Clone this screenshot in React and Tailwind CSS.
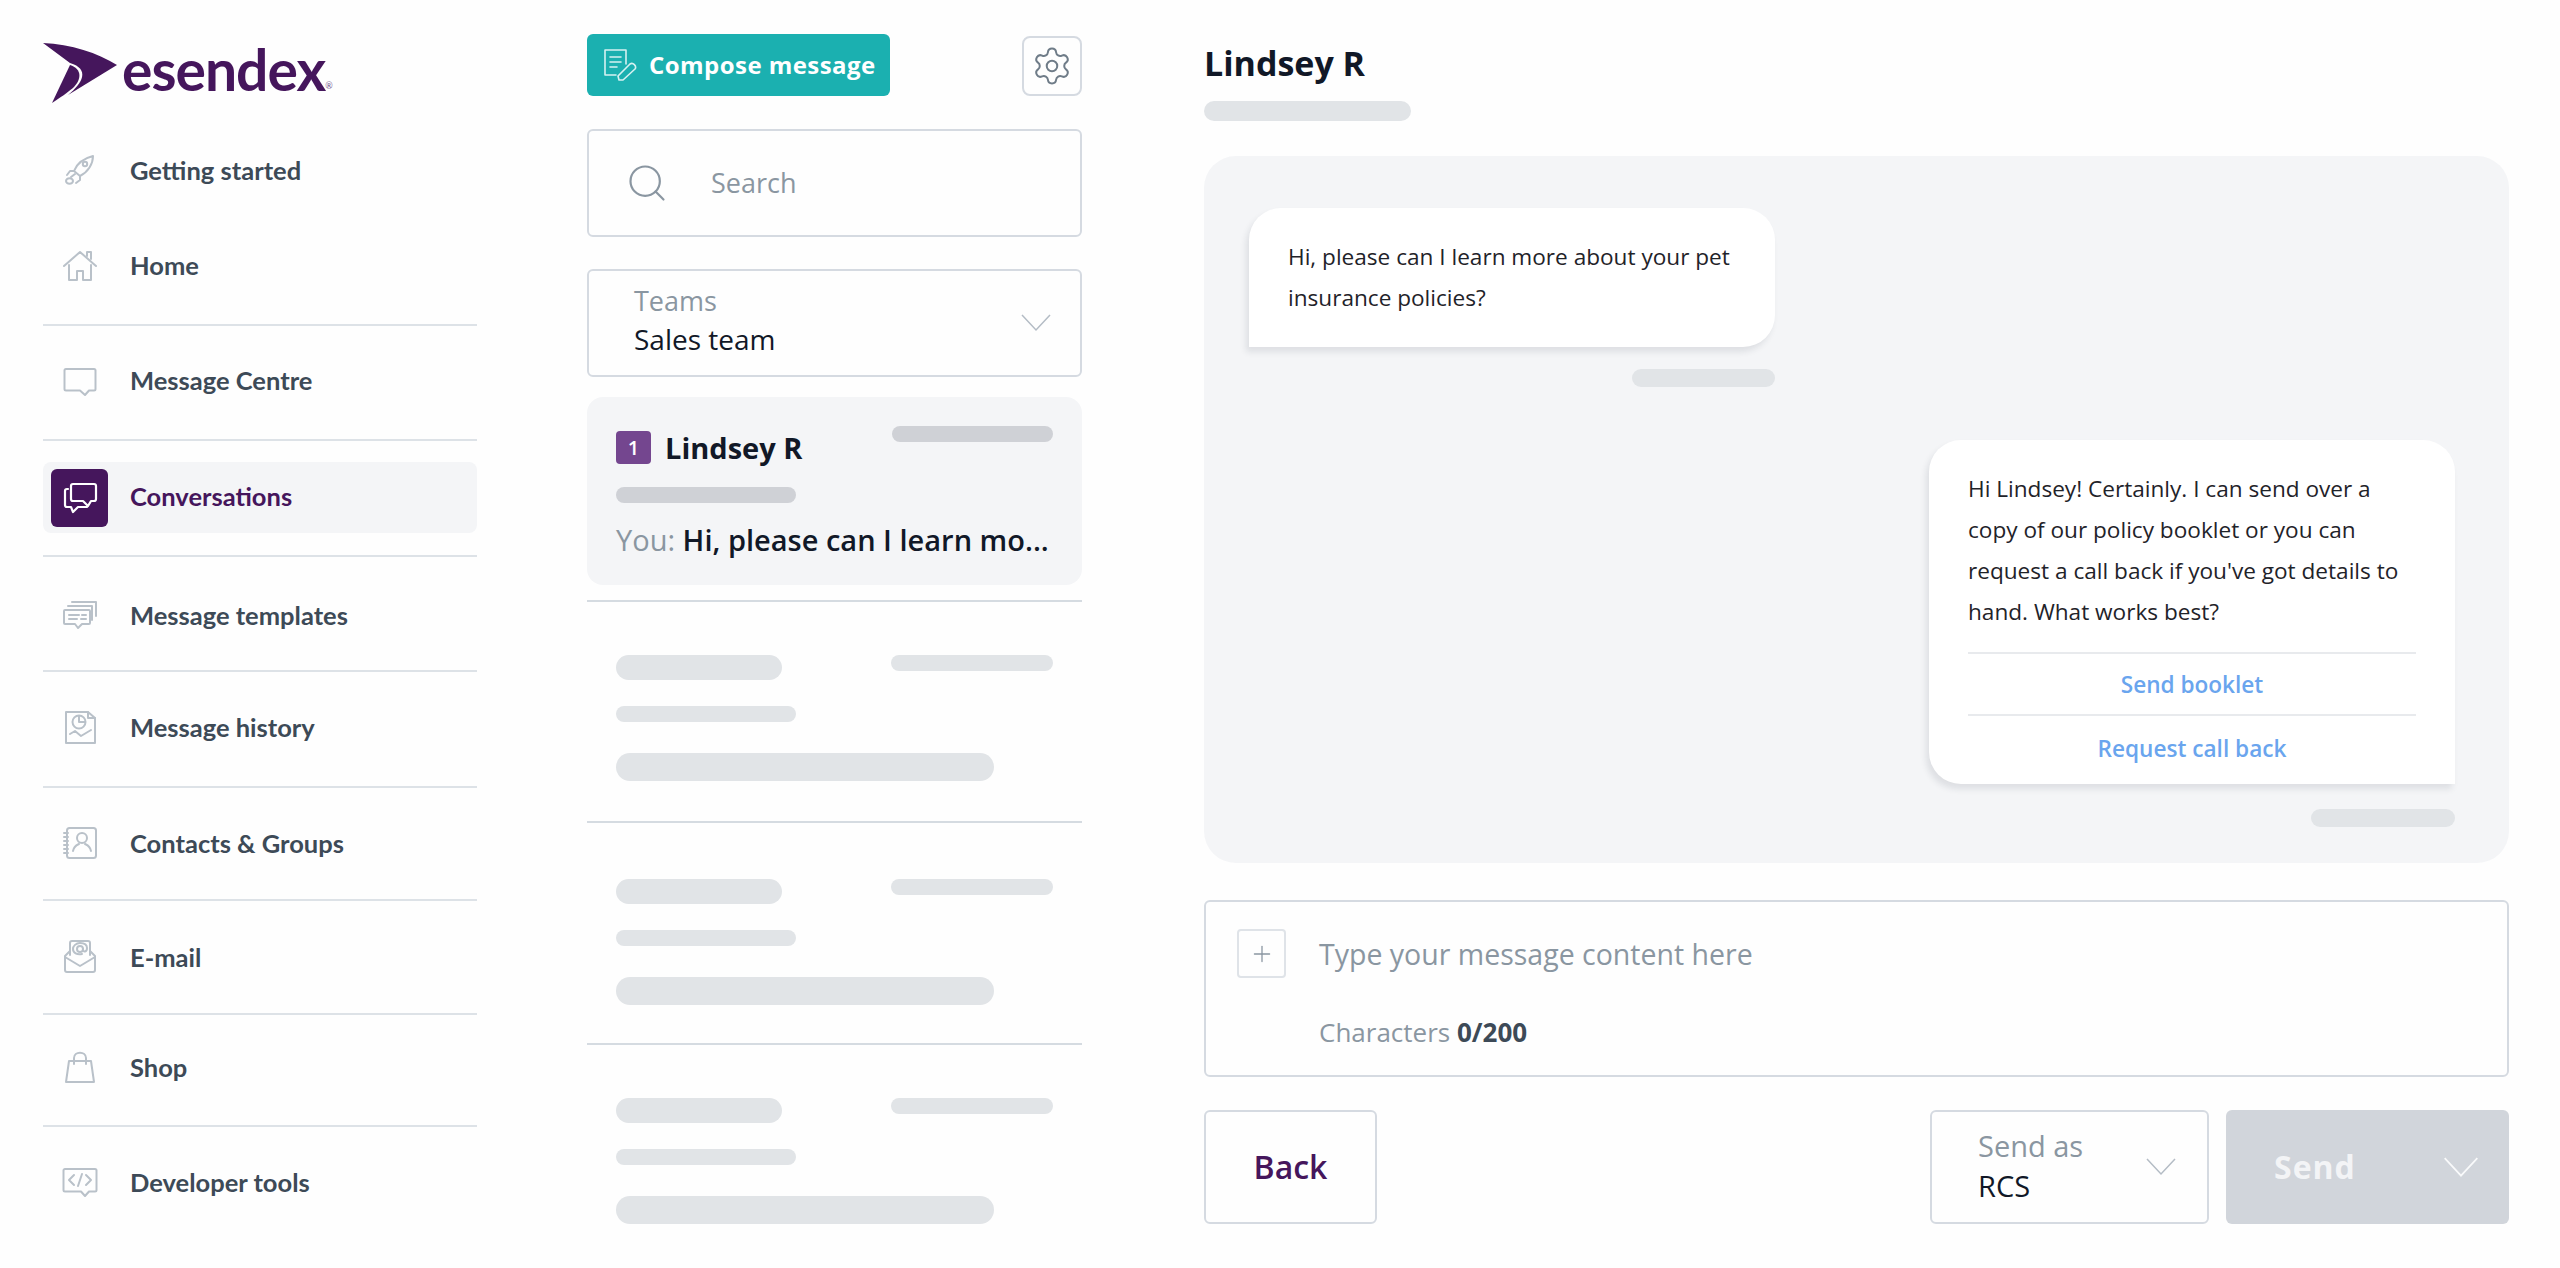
import React from "react";
import { Settings, Search, Plus } from "lucide-react";

const lato = { fontFamily: "Lato, sans-serif" };

const Icon = ({ children }) => (
  <svg width="36" height="36" viewBox="0 0 36 36" fill="none" stroke="#b9c1c9" strokeWidth="2" strokeLinejoin="round" strokeLinecap="round">
    {children}
  </svg>
);

const RocketIcon = () => (
  <Icon>
    <path d="M12 19 C15 11 23 6 31 4 C31 12 26 20 18 24 Z" />
    <circle cx="23" cy="12" r="2.2" />
    <path d="M12 19 L8 19 L5 23 M18 24 L18 28 L14 31" />
    <ellipse cx="7.5" cy="29" rx="3.5" ry="2.8" />
    <path d="M9 25 L13 22" />
  </Icon>
);

const HomeIcon = () => (
  <Icon>
    <path d="M2 19 L18 5 L34 19" />
    <path d="M25 9 L25 5 L29 5 L29 12" />
    <path d="M7 18 L7 33 L15 33 L15 24 L21 24 L21 33 L29 33 L29 18" />
  </Icon>
);

const ChatIcon = () => (
  <Icon>
    <path d="M4 6 H32 a1.5 1.5 0 0 1 1.5 1.5 V26 a1.5 1.5 0 0 1 -1.5 1.5 H27 L23 32 L18 27.5 H4 a1.5 1.5 0 0 1 -1.5 -1.5 V7.5 A1.5 1.5 0 0 1 4 6 Z" />
  </Icon>
);

const ConversationsIcon = () => (
  <svg width="36" height="36" viewBox="0 0 36 36" fill="none" stroke="#ffffff" strokeWidth="2.2" strokeLinejoin="round" strokeLinecap="round">
    <path d="M11 4 H32 a2 2 0 0 1 2 2 V19 a2 2 0 0 1 -2 2 H29 L26 26 L21 21 H11 a2 2 0 0 1 -2 -2 V6 a2 2 0 0 1 2 -2 Z" />
    <path d="M6 9 H5 a2 2 0 0 0 -2 2 V25 a2 2 0 0 0 2 2 H9 L11 32 L16 27 H25" />
  </svg>
);

const TemplatesIcon = () => (
  <Icon>
    <path d="M10 5 H34 V19 M6 9 H30 V23" />
    <path d="M3 13 H27 a1 1 0 0 1 1 1 V26 a1 1 0 0 1 -1 1 H20 L16 31 L13 27 H3 a1 1 0 0 1 -1 -1 V14 a1 1 0 0 1 1 -1 Z" />
    <path d="M7 18 H17 M7 22 H15 M20 18 H24 M19 22 H24" />
  </Icon>
);

const HistoryIcon = () => (
  <Icon>
    <path d="M4 3 H26 L33 9 V34 H4 Z" />
    <path d="M26 3 V9 H33" />
    <circle cx="17" cy="13" r="6.5" />
    <path d="M17 7 V13 H23" />
    <path d="M8 25 L13 22 L19 27 L29 21" />
  </Icon>
);

const ContactsIcon = () => (
  <Icon>
    <rect x="5" y="3" width="29" height="30" rx="2.5" />
    <path d="M2 8 H6 M2 12 H6 M2 16 H6 M2 20 H6 M2 24 H6 M2 28 H6" />
    <circle cx="20" cy="13" r="5" />
    <path d="M11 26 C12 21 15 20 17 19 M29 26 C28 21 25 20 23 19" />
  </Icon>
);

const EmailIcon = () => (
  <Icon>
    <path d="M8 16 V4 a2 2 0 0 1 2 -2 H26 a2 2 0 0 1 2 2 V16" />
    <circle cx="18" cy="10" r="3" />
    <path d="M21 10 C21 14 25 13 25 9 C25 5 21 4 18 4 C14 4 11 7 11 10 C11 14 15 16 20 15" />
    <path d="M8 12 L3 17 V31 a2 2 0 0 0 2 2 H31 a2 2 0 0 0 2 -2 V17 L28 12" />
    <path d="M3 18 L18 27 L33 18" />
  </Icon>
);

const ShopIcon = () => (
  <Icon>
    <path d="M7 12 H29 L32 33 H4 Z" />
    <path d="M12 15 V9 C12 2 24 2 24 9 V15" />
  </Icon>
);

const DevIcon = () => (
  <Icon>
    <path d="M3 5 H33 a1.5 1.5 0 0 1 1.5 1.5 V26 a1.5 1.5 0 0 1 -1.5 1.5 H27 L23 32 L19 27.5 H3 a1.5 1.5 0 0 1 -1.5 -1.5 V6.5 A1.5 1.5 0 0 1 3 5 Z" />
    <path d="M12 11 L7 16 L12 21 M24 11 L29 16 L24 21 M20 10 L16 22" />
  </Icon>
);

const navItems = [
  { label: "Getting started", icon: <RocketIcon />, row: "h-[96px] pb-[2px]" },
  { label: "Home", icon: <HomeIcon />, row: "h-[107px] pb-[13px] border-b-2 border-[#dde2e7]" },
  { label: "Message Centre", icon: <ChatIcon />, row: "h-[115px] pb-[4px] border-b-2 border-[#dde2e7]" },
  { label: "Conversations", icon: <ConversationsIcon />, row: "h-[116px] pb-[1px] border-b-2 border-[#dde2e7]", active: true },
  { label: "Message templates", icon: <TemplatesIcon />, row: "h-[115px] pt-[3px] border-b-2 border-[#dde2e7]" },
  { label: "Message history", icon: <HistoryIcon />, row: "h-[116px] pb-[4px] border-b-2 border-[#dde2e7]" },
  { label: "Contacts & Groups", icon: <ContactsIcon />, row: "h-[113px] pb-[1px] border-b-2 border-[#dde2e7]" },
  { label: "E-mail", icon: <EmailIcon />, row: "h-[114px] border-b-2 border-[#dde2e7]" },
  { label: "Shop", icon: <ShopIcon />, row: "h-[112px] pb-[6px] border-b-2 border-[#dde2e7]" },
  { label: "Developer tools", icon: <DevIcon />, row: "h-[110px]" },
];

const Chevron = ({ color = "#b4bcc5", size = "w-[30px] h-[18px]" }) => (
  <svg className={size} viewBox="0 0 30 18" fill="none" stroke={color} strokeWidth="1.5">
    <path d="M1 1 L15 16 L29 1" />
  </svg>
);

const Sidebar = () => (
  <aside className="w-[434px] ml-[43px] shrink-0" style={lato}>
    <div className="h-[123px] pt-[43px] flex items-start">
      <svg width="75" height="60" viewBox="0 0 75 60" fill="#45165c">
        <path d="M0 0 C28 1 55 10 74 22 L25 52 C40 40 47 26 27 20 Z" />
        <path d="M27 22 C39 26 39 36 30 45 C25 49 17 55 9 60 Z" />
      </svg>
      <span className="text-[57px] leading-[48px] font-bold text-[#45165c] tracking-[-1px] ml-[4px] mt-[2px]">esendex</span>
      <span className="text-[9px] leading-none text-[#7a5a90] mt-[38px]">®</span>
    </div>
    {navItems.map((item) => (
      <div key={item.label} className={`flex items-center ${item.row}`}>
        <div className={`flex items-center w-full ${item.active ? "h-[71px] bg-[#f4f5f7] rounded-lg pl-2" : "pl-2"}`}>
          <div className={`w-[57px] flex items-center justify-center ${item.active ? "h-[58px] bg-[#45165c] rounded-md" : ""}`}>
            {item.icon}
          </div>
          <span className={`ml-[22px] text-[25.5px] font-bold ${item.active ? "text-[#45165c] -mt-[2px]" : "text-[#3d4a57]"}`}>{item.label}</span>
        </div>
      </div>
    ))}
  </aside>
);

const Skeleton = ({ className }) => (
  <div className={className}>
    <div className="flex justify-between pl-[29px] pr-[29px]">
      <div className="w-[166px] h-[25px] rounded-full bg-[#e1e4e7]" />
      <div className="w-[162px] h-[16px] rounded-full bg-[#e1e4e7]" />
    </div>
    <div className="ml-[29px] mt-[26px] w-[180px] h-[16px] rounded-full bg-[#e1e4e7]" />
    <div className="ml-[29px] mt-[31px] w-[378px] h-[28px] rounded-full bg-[#e1e4e7]" />
  </div>
);

const ConversationList = () => (
  <section className="w-[495px] ml-[110px] shrink-0 pt-[34px]">
    <div className="flex justify-between items-center h-[62px]">
      <button className="w-[303px] h-[62px] rounded-md bg-[#1bb0b0] flex items-center pl-[16px] gap-[12px] text-white text-[24px] font-bold tracking-[0.45px]">
        <svg width="34" height="34" viewBox="0 0 34 34" fill="none" stroke="#d6f1f1" strokeWidth="1.6" strokeLinejoin="round" strokeLinecap="round">
          <path d="M23 16 V2 H2 V27 H13" />
          <path d="M7 9 H18 M7 14 H18 M7 19 H14" />
          <path d="M16 32 L15 28 L27 16 C30 14 34 18 32 21 L20 32 Z" />
        </svg>
        Compose message
      </button>
      <button className="w-[60px] h-[60px] mt-[2px] rounded-lg border-2 border-[#d5dae1] flex items-center justify-center">
        <Settings size={42} strokeWidth={1.15} color="#6f7c88" />
      </button>
    </div>

    <div className="mt-[33px] h-[108px] rounded-md border-2 border-[#d5dae1] flex items-center pl-[36px]">
      <Search size={44} strokeWidth={1.2} color="#8a96a1" />
      <span className="ml-[42px] text-[27px] text-[#8a96a1]">Search</span>
    </div>

    <div className="mt-[32px] h-[108px] rounded-md border-2 border-[#d5dae1] flex items-center justify-between pl-[45px] pr-[29px]">
      <div className="pb-[6px]">
        <div className="text-[27px] leading-[38px] text-[#8a96a1]">Teams</div>
        <div className="text-[28px] leading-[38px] font-medium text-[#111827]">Sales team</div>
      </div>
      <Chevron />
    </div>

    <div className="mt-[20px] h-[188px] rounded-2xl bg-[#f4f5f7] pt-[29px] pl-[29px] pr-[29px]">
      <div className="flex justify-between items-start h-[61px]">
        <div className="flex items-center mt-[5px]">
          <span className="w-[35px] h-[33px] rounded-sm bg-[#74468f] text-white text-[20px] font-semibold flex items-center justify-center">1</span>
          <span className="ml-[14px] text-[29px] font-bold text-[#111827] leading-[33px]">Lindsey R</span>
        </div>
        <div className="w-[161px] h-[16px] rounded-full bg-[#cfd1d6]" />
      </div>
      <div className="w-[180px] h-[16px] rounded-full bg-[#cfd1d6]" />
      <div className="mt-[19px] text-[29px] leading-[36px] whitespace-nowrap">
        <span className="text-[#8a96a1]">You: </span>
        <span className="text-[#111827] font-semibold">Hi, please can I learn mo...</span>
      </div>
    </div>

    <div className="mt-[15px] border-t-2 border-[#d5dbe1]" />
    <Skeleton className="pt-[53px] pb-[40px] border-b-2 border-[#d5dbe1]" />
    <Skeleton className="pt-[56px] pb-[38px] border-b-2 border-[#d5dbe1]" />
    <Skeleton className="pt-[53px]" />
  </section>
);

const Thread = () => (
  <section className="w-[1305px] ml-[122px] shrink-0">
    <h1 className="mt-[39px] text-[34px] leading-[48px] font-bold text-[#111827]">Lindsey R</h1>
    <div className="mt-[14px] w-[207px] h-[20px] rounded-full bg-[#e1e4e7]" />

    <div className="mt-[35px] h-[707px] rounded-[32px] bg-[#f4f5f7] pt-[52px] pl-[45px] pr-[54px] flex flex-col">
      <div className="w-[526px] h-[139px] bg-white rounded-[32px] rounded-bl-none shadow-[-3px_5px_6px_rgba(30,40,60,0.1)] pt-[28px] pl-[39px] text-[22.6px] leading-[41px] text-[#1f2329]">
        Hi, please can I learn more about your pet
        <br />
        insurance policies?
      </div>
      <div className="mt-[22px] ml-[383px] w-[143px] h-[18px] rounded-full bg-[#e1e4e7]" />

      <div className="mt-[53px] self-end w-[526px] h-[344px] bg-white rounded-[32px] rounded-br-none shadow-[-3px_5px_6px_rgba(30,40,60,0.1)] pt-[28px] px-[39px] text-[22.6px] leading-[41px] text-[#1f2329]">
        Hi Lindsey! Certainly. I can send over a
        <br />
        copy of our policy booklet or you can
        <br />
        request a call back if you've got details to
        <br />
        hand. What works best?
        <div className="mt-[20px] h-[62px] border-t-2 border-[#e8eaed] flex items-center justify-center text-[#6aa5ee] font-semibold">Send booklet</div>
        <div className="h-[66px] border-t-2 border-[#e8eaed] flex items-center justify-center text-[#6aa5ee] font-semibold">Request call back</div>
      </div>
      <div className="mt-[25px] self-end w-[144px] h-[18px] rounded-full bg-[#e1e4e7]" />
    </div>

    <div className="mt-[37px] h-[177px] rounded-md border-2 border-[#d5dae1] flex pl-[31px] pt-[27px]">
      <div className="w-[49px] h-[49px] rounded border-2 border-[#dfe3e8] flex items-center justify-center">
        <Plus size={26} strokeWidth={1.2} color="#8a96a1" />
      </div>
      <div className="ml-[33px]">
        <div className="h-[49px] pt-[2px] flex items-center text-[28.5px] text-[#8a96a1]">Type your message content here</div>
        <div className="mt-[38px] text-[26px] leading-[32px] text-[#8a96a1]">
          Characters <span className="font-bold text-[#3d4a57]">0/200</span>
        </div>
      </div>
    </div>

    <div className="mt-[33px] flex h-[114px]">
      <button className="w-[173px] rounded-md border-2 border-[#d5dae1] text-[32px] font-semibold text-[#45165c]">Back</button>
      <div className="ml-auto w-[279px] rounded-md border-2 border-[#d5dae1] flex items-center justify-between pl-[46px] pr-[31px]">
        <div className="pb-[2px]">
          <div className="text-[29px] leading-[40px] text-[#8a96a1]">Send as</div>
          <div className="text-[29px] leading-[40px] text-[#111827]">RCS</div>
        </div>
        <Chevron />
      </div>
      <button className="ml-[17px] w-[283px] rounded-md bg-[#d1d5db] flex items-center justify-between pl-[48px] pr-[29px] text-[32px] font-bold tracking-[1px] text-[#f3f4f6]">
        Send
        <Chevron color="#f9fafb" size="w-[38px] h-[21px]" />
      </button>
    </div>
  </section>
);

export default function App() {
  return (
    <div className="flex h-[1268px] w-full overflow-hidden bg-[#fefefe]" style={{ fontFamily: '"Open Sans", sans-serif' }}>
      <Sidebar />
      <ConversationList />
      <Thread />
    </div>
  );
}
